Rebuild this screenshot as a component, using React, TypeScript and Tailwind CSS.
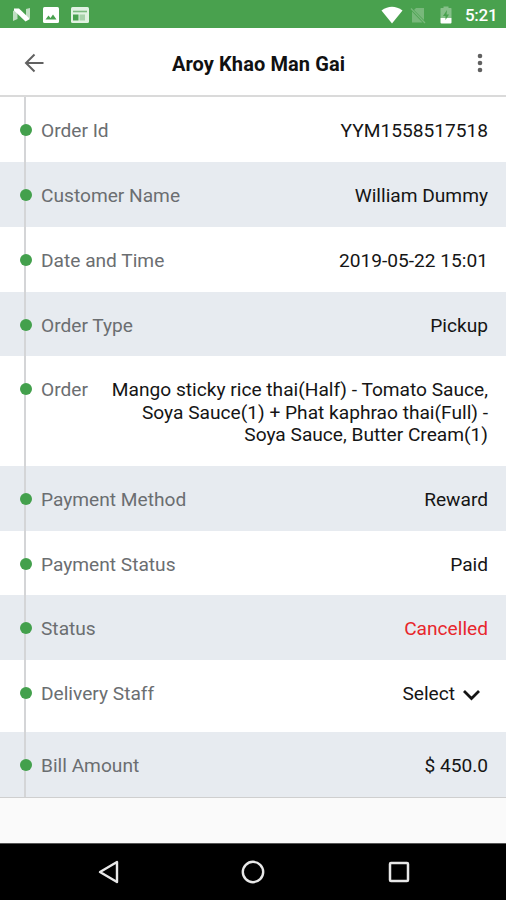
import { clsx } from "clsx";

type OrderRow = {
  label: string;
  value: string;
  height: string;
  valueClass?: string;
  isSelect?: boolean;
};

const rows: OrderRow[] = [
  { label: "Order Id", value: "YYM1558517518", height: "h-[65px]" },
  { label: "Customer Name", value: "William Dummy", height: "h-[64.5px]" },
  { label: "Date and Time", value: "2019-05-22 15:01", height: "h-[65px]" },
  { label: "Order Type", value: "Pickup", height: "h-[64.5px]" },
  {
    label: "Order",
    value: "Mango sticky rice thai(Half) - Tomato Sauce, Soya Sauce(1) + Phat kaphrao thai(Full) - Soya Sauce, Butter Cream(1)",
    height: "h-[110px]",
  },
  { label: "Payment Method", value: "Reward", height: "h-[64.5px]" },
  { label: "Payment Status", value: "Paid", height: "h-[64.5px]" },
  { label: "Status", value: "Cancelled", height: "h-[65px]", valueClass: "text-[#e8262c]" },
  { label: "Delivery Staff", value: "Select", height: "h-[72px]", isSelect: true },
  { label: "Bill Amount", value: "$ 450.0", height: "h-[65px]" },
];

function StatusBar() {
  return (
    <div className="flex h-[28px] items-center bg-[#49a14e] pl-[12px] pr-[9px] pt-[2px] text-white">
      <svg className="h-[16px] w-[20px]" viewBox="0 0 20 16">
        <path d="M1 4 L5.5 2 V12 L1 14Z M14 2 L18 1 V11 L14 13Z" fill="#fff" opacity=".65" />
        <path d="M2 1.5 H7 L18 12 L13.5 14.5 L2 3.5Z" fill="#fff" />
      </svg>
      <svg className="ml-[11px] h-[16px] w-[16px]" viewBox="0 0 16 16">
        <rect width="16" height="16" rx="1.5" fill="#fff" />
        <path d="M2.5 12.5 L5.5 8.5 L7.5 11 L10 7.5 L13.5 12.5Z" fill="#49a14e" />
      </svg>
      <svg className="ml-[12px] h-[16px] w-[18px]" viewBox="0 0 18 16">
        <rect width="18" height="16" rx="1.5" fill="#e2f2e2" />
        <path d="M2 4.5H16" stroke="#7dba80" strokeWidth="1.6" />
        <rect x="2" y="7.5" width="5.5" height="6" fill="#49a14e" />
        <path d="M8.5 7.5H14V13.5H8.5Z" fill="#a9d2ab" />
      </svg>
      <div className="flex-1" />
      <svg className="h-[18px] w-[22px]" viewBox="0 0 22 18">
        <path d="M.5 4.5 Q11-3 21.5 4.5 L11 17.5Z" fill="#fff" />
      </svg>
      <svg className="ml-[7px] h-[17px] w-[16px]" viewBox="0 0 16 17">
        <path d="M6 1H14V13L4 3Z M2 4.5L12.5 15.5H2Z" fill="#78b87b" />
        <path d="M1 1.5L15 16" stroke="#78b87b" strokeWidth="1.3" />
      </svg>
      <svg className="ml-[14px] h-[18px] w-[12px]" viewBox="0 0 12 18">
        <path d="M1 2H3.5V.5H8.5V2H11Q11.5 2 11.5 3V12H.5V3Q.5 2 1 2Z" fill="#86c089" />
        <path d="M.5 12H11.5V16.5Q11.5 17.5 10.5 17.5H1.5Q.5 17.5.5 16.5Z" fill="#fff" />
        <path d="M7 4L3 10H5.5V14L9 8.5H6.5Z" fill="#49a14e" />
      </svg>
      <span className="ml-[13px] w-[32px] whitespace-nowrap text-[17px] font-medium leading-[20px] tracking-[-0.3px]">5:21</span>
    </div>
  );
}

function Header() {
  return (
    <header className="flex h-[69px] items-center justify-between border-b-2 border-[#dadada] bg-white pl-[24px] pr-[22px] text-[#616161]">
      <svg className="mt-[2px] h-[20px] w-[20px]" viewBox="0 0 20 20" fill="none" stroke="currentColor" strokeWidth="2">
        <path d="M19.5 10H2M10.5 1.5L2 10L10.5 18.5" />
      </svg>
      <h1 className="mr-[3px] mt-[4px] text-[20px] font-bold tracking-[0.1px] text-[#111]">Aroy Khao Man Gai</h1>
      <svg className="mt-[2px] h-[20px] w-[8px]" viewBox="0 0 8 20" fill="currentColor">
        <circle cx="4" cy="3" r="2.3" />
        <circle cx="4" cy="10" r="2.3" />
        <circle cx="4" cy="17" r="2.3" />
      </svg>
    </header>
  );
}

function DetailRow({ row, shaded }: { row: OrderRow; shaded: boolean }) {
  return (
    <div className={clsx("flex pr-[18px]", row.height, shaded ? "bg-[#e7ebf0]" : "bg-white")}>
      <div className="relative ml-[24px] w-[2px] shrink-0 bg-[#d4d5d7]">
        <span className="absolute -left-[4px] top-[27px] h-[12px] w-[12px] rounded-full bg-[#43a04c]" />
      </div>
      <span className="ml-[15px] shrink-0 pt-[23px] text-[#6b6e71]">{row.label}</span>
      <div className={clsx("ml-auto w-[380px] min-w-0 pt-[23px] text-right", row.valueClass ?? "text-[#151515]")}>
        {row.value}
        {row.isSelect && (
          <svg className="ml-[8px] mr-[8px] inline-block h-[12px] w-[17px]" viewBox="0 0 17 12" fill="none" stroke="currentColor" strokeWidth="2.8">
            <path d="M1 2L8.5 9.5L16 2" />
          </svg>
        )}
      </div>
    </div>
  );
}

function NavBar() {
  return (
    <nav className="flex h-[57px] items-center justify-between border-t border-[#555] bg-black pl-[97px] pr-[95px]">
      <svg className="h-[24px] w-[22px]" viewBox="0 0 22 24" fill="none" stroke="#e8e8e8" strokeWidth="2.4" strokeLinejoin="round">
        <path d="M20 2V22L3 12Z" />
      </svg>
      <svg className="h-[24px] w-[24px]" viewBox="0 0 24 24" fill="none" stroke="#e8e8e8" strokeWidth="2.4">
        <circle cx="12" cy="12" r="10.2" />
      </svg>
      <svg className="h-[24px] w-[24px]" viewBox="0 0 24 24" fill="none" stroke="#e8e8e8" strokeWidth="2.5">
        <rect x="3" y="3" width="18" height="18" rx="1" />
      </svg>
    </nav>
  );
}

export default function App() {
  return (
    <div className="flex h-[900px] w-[506px] flex-col bg-[#fafafa] font-[Roboto,sans-serif]">
      <StatusBar />
      <Header />
      <main className="flex-1 text-[19.15px] leading-[22.5px]">
        <div className="border-b border-[#cfcfcf]">
          {rows.map((row, index) => (
            <DetailRow key={row.label} row={row} shaded={[1, 3, 5, 7, 9].includes(index)} />
          ))}
        </div>
      </main>
      <NavBar />
    </div>
  );
}
